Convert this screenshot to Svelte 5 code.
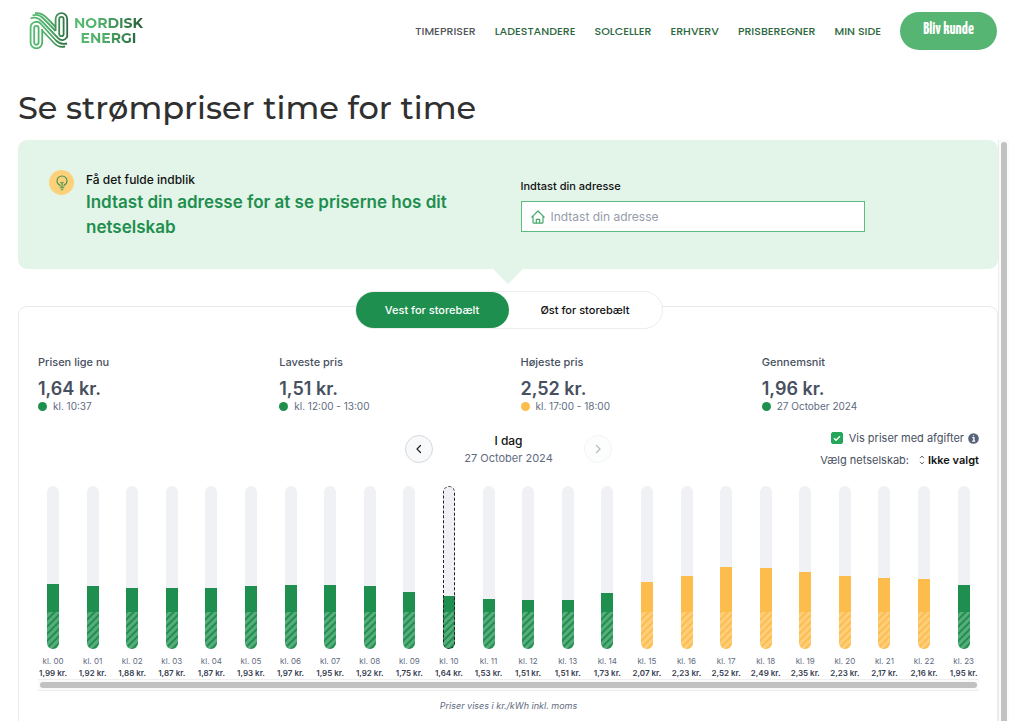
<script>
  const nav = ['TIMEPRISER', 'LADESTANDERE', 'SOLCELLER', 'ERHVERV', 'PRISBEREGNER', 'MIN SIDE'];
  const stats = [
    { label: 'Prisen lige nu', value: '1,64 kr.', note: 'kl. 10:37', high: false },
    { label: 'Laveste pris', value: '1,51 kr.', note: 'kl. 12:00 - 13:00', high: false },
    { label: 'Højeste pris', value: '2,52 kr.', note: 'kl. 17:00 - 18:00', high: true },
    { label: 'Gennemsnit', value: '1,96 kr.', note: '27 October 2024', high: false }
  ];
  const prices = [
    1.99, 1.92, 1.88, 1.87, 1.87, 1.93, 1.97, 1.95, 1.92, 1.75, 1.64, 1.53,
    1.51, 1.51, 1.73, 2.07, 2.23, 2.52, 2.49, 2.35, 2.23, 2.17, 2.16, 1.95
  ];
  const maxPrice = 5;
  const currentHour = 10;
  const hours = prices.map((price, i) => ({
    label: 'kl. ' + String(i).padStart(2, '0'),
    text: price.toFixed(2).replace('.', ',') + ' kr.',
    height: (price / maxPrice) * 100,
    high: price > 2,
    now: i === currentHour
  }));
  let region = $state('vest');
  let taxes = $state(true);
</script>

<div class="page">
  <header>
    <a class="logo" href="#top" aria-label="Nordisk Energi">
      <svg width="40" height="38" viewBox="0 0 40 38" fill="none" stroke="url(#mark)" stroke-width="1.8" stroke-linecap="butt">
        <defs>
          <linearGradient id="mark" gradientUnits="userSpaceOnUse" x1="0" y1="0" x2="40" y2="0">
            <stop offset="0" stop-color="#58bd74" />
            <stop offset=".5" stop-color="#4dab67" />
            <stop offset="1" stop-color="#2b683e" />
          </linearGradient>
        </defs>
        <path d="M13.200 17V30.500a5.800 5.800 0 0 1-11.600 0V15.500a5.800 5.800 0 0 1 9.900-4L27 28.500q4.500 4.500 11 3" />
        <path d="M9.600 17V30.500a2.200 2.200 0 0 1-4.400 0V16a2.200 2.200 0 0 1 4.400 0V18" />
        <path d="M1.500 6.500q6-2.500 11 2.500L29.500 26.500q4.500 4 8.700-1.500V7a5.800 5.800 0 0 0-11.600 0V19" />
        <path d="M3.500 3.500q6-2 11 3L26.600 19M25 31q4.500 5 11 3.500" />
        <path d="M6 1.200q6-1 11 4L26.600 15M13.200 18.500L25 31" />
        <path d="M30.200 22.500V7a2.200 2.200 0 0 1 4.400 0V22a2.200 2.200 0 0 1-4.400 0" />
      </svg>
      <span class="brand"><span>NORDISK</span><span>ENERGI</span></span>
    </a>
    <nav>
      {#each nav as item, i}
        <a href="#{item.toLowerCase().replace(' ', '-')}" class:active={i === 0}>{item}</a>
      {/each}
      <a class="cta" href="#bliv-kunde">Bliv kunde</a>
    </nav>
  </header>

  <h1>Se strømpriser time for time</h1>

  <div class="frame">
    <main>
      <section class="banner">
        <div class="intro">
          <span class="bulb">
            <svg width="14" height="16" viewBox="0 0 14 16" fill="none" stroke="#3f9550" stroke-width="1.100" stroke-linecap="round" stroke-linejoin="round">
              <path d="M5 11V10.300C3.200 9.500 2 8 2 6a5 5 0 0 1 10 0c0 2-1.200 3.500-3 4.300V11M5.300 12.800h3.400M6.300 14.800h1.400M7 12V8M5.800 7.300L7 8.300 8.200 7.300" />
            </svg>
          </span>
          <div>
            <p>Få det fulde indblik</p>
            <h2>Indtast din adresse for at se priserne hos dit netselskab</h2>
          </div>
        </div>
        <div class="address">
          <label for="address">Indtast din adresse</label>
          <div class="field">
            <svg width="14" height="14" viewBox="0 0 14 14" fill="none" stroke="#45a86b" stroke-width="1.200" stroke-linecap="round" stroke-linejoin="round">
              <path d="M.8 7.200L7 1l6.200 6.200M2 6.200V12.200a1 1 0 0 0 1 1h8a1 1 0 0 0 1-1V6.200M5.300 13V9.300h3.400V13" />
            </svg>
            <input id="address" type="text" placeholder="Indtast din adresse" />
          </div>
        </div>
      </section>

      <section class="card">
        <div class="tabs">
          <button class:on={region === 'vest'} onclick={() => (region = 'vest')}>Vest for storebælt</button>
          <button class:on={region === 'oest'} onclick={() => (region = 'oest')}>Øst for storebælt</button>
        </div>

        <div class="stats">
          {#each stats as s}
            <div class="stat">
              <h3>{s.label}</h3>
              <strong>{s.value}</strong>
              <span class="note"><i class:high={s.high}></i>{s.note}</span>
            </div>
          {/each}
        </div>

        <div class="controls">
          <div class="day">
            <button aria-label="Forrige dag">
              <svg width="8" height="10" viewBox="0 0 8 10"><path d="M5.500 1.500L2 5l3.500 3.500" /></svg>
            </button>
            <div class="date"><b>I dag</b><span>27 October 2024</span></div>
            <button aria-label="Næste dag" disabled>
              <svg width="8" height="10" viewBox="0 0 8 10"><path d="M2.500 1.500L6 5 2.500 8.500" /></svg>
            </button>
          </div>
          <div class="options">
            <label class="tax">
              <input type="checkbox" bind:checked={taxes} />
              Vis priser med afgifter
              <svg width="11" height="11" viewBox="0 0 11 11">
                <circle cx="5.500" cy="5.500" r="5.300" fill="#56617a" />
                <path d="M4.300 4.600h1.600v3.400M4.200 8.200h3M5.500 2.300v1" fill="none" stroke="#fff" stroke-width="1.300" />
              </svg>
            </label>
            <div class="grid-company">
              <label for="company">Vælg netselskab:</label>
              <span class="pick">
                <svg width="6" height="10" viewBox="0 0 6 10" fill="none" stroke="#555" stroke-width=".9"><path d="M1 3.200L3 1l2 2.200M1 6.800L3 9l2-2.200" /></svg>
                <select id="company"><option>Ikke valgt</option></select>
              </span>
            </div>
          </div>
        </div>

        <div class="chart">
          {#each hours as h}
            <div class="hour">
              <div class="track" class:now={h.now}>
                <div class="fill" class:high={h.high} style="height: {h.height}%"><div class="stripes"></div></div>
              </div>
              <span>{h.label}</span>
              <b>{h.text}</b>
            </div>
          {/each}
        </div>
        <div class="hscroll"><div></div></div>
        <p class="foot">Priser vises i kr./kWh inkl. moms</p>
      </section>
    </main>
    <div class="vscroll"><div></div></div>
  </div>
</div>

<style>
  :global(body) {
    margin: 0;
    background: #fff;
  }
  .page {
    box-sizing: border-box;
    min-height: 100vh;
    display: flex;
    flex-direction: column;
    padding: 12px 15px 0 18px;
    font-family: Inter, 'Liberation Sans', sans-serif;
    color: #475060;
  }
  header {
    display: flex;
    justify-content: space-between;
    align-items: center;
    padding: 0 12px 0 11px;
  }
  a {
    text-decoration: none;
  }
  .logo {
    display: flex;
    align-items: center;
    gap: 5px;
  }
  .brand {
    display: flex;
    flex-direction: column;
    align-items: center;
    font: 700 14px/15px Montserrat, Inter, sans-serif;
    color: transparent;
    background: linear-gradient(90deg, #58bd74, #4dab67 45%, #235c36);
    -webkit-background-clip: text;
    background-clip: text;
  }
  nav {
    display: flex;
    align-items: center;
    gap: 19px;
    font: 500 11px/16px Poppins, Inter, sans-serif;
  }
  nav a {
    color: #2c683e;
    white-space: nowrap;
  }
  nav a.active {
    color: #55565c;
  }
  nav a.cta {
    width: 97px;
    height: 38px;
    padding-bottom: 2px;
    box-sizing: border-box;
    border-radius: 19px;
    background: #57b574;
    color: #fff;
    display: flex;
    align-items: center;
    justify-content: center;
    font: 700 17px 'Yanone Kaffeesatz', 'Liberation Sans Narrow', sans-serif;
  }
  h1 {
    margin: 36px 0 10px;
    font: 500 32px/44px Montserrat, Inter, sans-serif;
    color: #303030;
  }
  .frame {
    flex: 1;
    display: flex;
  }
  main {
    flex: 1;
    min-width: 0;
    display: flex;
    flex-direction: column;
  }
  .banner {
    position: relative;
    display: grid;
    grid-template-columns: 1fr 1fr;
    gap: 24px;
    box-sizing: border-box;
    min-height: 129px;
    padding: 30px 30px 24px 31px;
    border-radius: 9px;
    background: #e3f4e9;
  }
  .banner::after {
    content: '';
    position: absolute;
    top: 100%;
    left: 50%;
    margin-left: -15px;
    border: 15px solid transparent;
    border-top-color: #e3f4e9;
    border-bottom: 0;
  }
  .intro {
    display: flex;
    gap: 12px;
  }
  .bulb {
    flex: none;
    width: 25px;
    height: 25px;
    border-radius: 50%;
    background: #fdd07a;
    display: flex;
    align-items: center;
    justify-content: center;
  }
  .intro p {
    margin: 0;
    font-size: 12px;
    line-height: 20px;
    font-weight: 500;
    color: #111;
  }
  h2 {
    margin: 0;
    font-size: 17px;
    line-height: 25px;
    font-weight: 600;
    color: #1e8f4e;
  }
  .address {
    padding: 8px 103px 0 0;
  }
  .address label {
    display: block;
    font-size: 11px;
    line-height: 16px;
    font-weight: 500;
    color: #111;
  }
  .field {
    display: flex;
    align-items: center;
    gap: 6px;
    margin-top: 7px;
    height: 29px;
    padding: 0 9px;
    border: 1px solid #5bbb82;
    background: #fff;
  }
  .field input {
    flex: 1;
    min-width: 0;
    border: 0;
    padding: 0;
    outline: 0;
    background: none;
    font: 400 12px Inter, sans-serif;
  }
  .field input::placeholder {
    color: #959caa;
  }
  .card {
    flex: 1;
    margin-top: 37px;
    padding: 0 18px 0 19px;
    border: 1px solid #e8e9ec;
    border-bottom: 0;
    border-radius: 9px 9px 0 0;
  }
  .tabs {
    display: grid;
    grid-template-columns: 1fr 1fr;
    width: 306px;
    margin: -16px auto 0;
    border: 1px solid #ecedef;
    border-radius: 19px;
    background: #fff;
  }
  .tabs button {
    height: 36px;
    border: 0;
    border-radius: 19px;
    background: none;
    font: 500 11px Inter, sans-serif;
    color: #111;
  }
  .tabs button.on {
    background: #1e8f4e;
    color: #fff;
  }
  .stats {
    display: grid;
    grid-template-columns: repeat(4, 1fr);
    gap: 24px;
    margin-top: 25px;
  }
  .stat {
    display: flex;
    flex-direction: column;
  }
  h3 {
    margin: 0;
    font-size: 11px;
    line-height: 16px;
    font-weight: 500;
  }
  .stat strong {
    margin-top: 8px;
    font-size: 18px;
    line-height: 22px;
    font-weight: 600;
  }
  .note {
    display: flex;
    align-items: center;
    gap: 6px;
    font-size: 10px;
    line-height: 12px;
    color: #616b80;
  }
  .note i {
    width: 9px;
    height: 9px;
    border-radius: 50%;
    background: #1e8f4e;
  }
  .note i.high {
    background: #fdbd4d;
  }
  .controls {
    display: grid;
    grid-template-columns: 1fr auto 1fr;
    margin-top: 18px;
  }
  .day {
    grid-column: 2;
    display: flex;
    align-items: center;
    gap: 31px;
  }
  .day button {
    width: 28px;
    height: 28px;
    padding: 0;
    border: 1px solid #d5d8de;
    border-radius: 50%;
    background: #f8f9fb;
    display: flex;
    align-items: center;
    justify-content: center;
  }
  .day button:disabled {
    opacity: 0.3;
  }
  .day path {
    fill: none;
    stroke: #222;
    stroke-width: 1.2;
    stroke-linecap: round;
    stroke-linejoin: round;
  }
  .date {
    display: flex;
    flex-direction: column;
    align-items: center;
    font-size: 11px;
    line-height: 16px;
    color: #616b80;
  }
  .date b {
    font-size: 12px;
    line-height: 18px;
    font-weight: 500;
    color: #111;
  }
  .options {
    justify-self: end;
    display: flex;
    flex-direction: column;
    align-items: flex-end;
    gap: 6px;
    font-size: 11px;
    line-height: 16px;
  }
  .tax {
    display: flex;
    align-items: center;
    gap: 4px;
  }
  .tax input {
    appearance: none;
    width: 12px;
    height: 12px;
    margin: 0 2px 0 0;
    border: 1px solid #24a65b;
    border-radius: 2px;
  }
  .tax input:checked {
    background: #24a65b url("data:image/svg+xml,%3Csvg xmlns='http://www.w3.org/2000/svg' viewBox='0 0 10 10'%3E%3Cpath d='M2 5.200l2 2 4-4' fill='none' stroke='white' stroke-width='1.400'/%3E%3C/svg%3E") center / 10px;
  }
  .grid-company {
    display: flex;
    gap: 10px;
  }
  .pick {
    display: flex;
    align-items: center;
    gap: 3px;
  }
  select {
    appearance: none;
    border: 0;
    padding: 0;
    background: none;
    font: 600 11px/16px Inter, sans-serif;
    color: #111;
  }
  .chart {
    display: flex;
    justify-content: space-between;
    margin-top: 18px;
  }
  .hour {
    width: 30px;
    display: flex;
    flex-direction: column;
    align-items: center;
    font-size: 8px;
    line-height: 12px;
    white-space: nowrap;
    color: #616b80;
  }
  .hour b {
    font-weight: 600;
    color: #384152;
  }
  .track {
    position: relative;
    width: 12px;
    height: 163px;
    margin-bottom: 6px;
    border-radius: 6px;
    overflow: hidden;
    background: #f0f1f5;
    display: flex;
    align-items: flex-end;
  }
  .now::after {
    content: '';
    position: absolute;
    inset: 0;
    border: 1px dashed #222;
    border-radius: 6px;
  }
  .fill {
    width: 100%;
    display: flex;
    align-items: flex-end;
    background: #1e8f4e;
  }
  .fill.high {
    background: #fdbd4d;
  }
  .stripes {
    width: 100%;
    height: 37px;
    background: repeating-linear-gradient(135deg, transparent 0 1px, rgba(255, 255, 255, 0.26) 2px 4px, transparent 5px);
  }
  .hscroll {
    padding: 2px;
    border: 1px solid #eeeeee;
    border-width: 1px 0;
    background: #fafafa;
  }
  .hscroll div {
    height: 6px;
    border-radius: 3px;
    background: #c1c1c1;
  }
  .foot {
    margin: 7px 0 0;
    text-align: center;
    font-size: 9px;
    line-height: 16px;
    font-style: italic;
    color: #616b80;
  }
  .vscroll {
    display: flex;
    padding: 2px 2px 0;
    border-left: 1px solid #ececec;
    background: #fafafa;
  }
  .vscroll div {
    width: 6px;
    border-radius: 3px 3px 0 0;
    background: #c1c1c1;
  }
</style>
